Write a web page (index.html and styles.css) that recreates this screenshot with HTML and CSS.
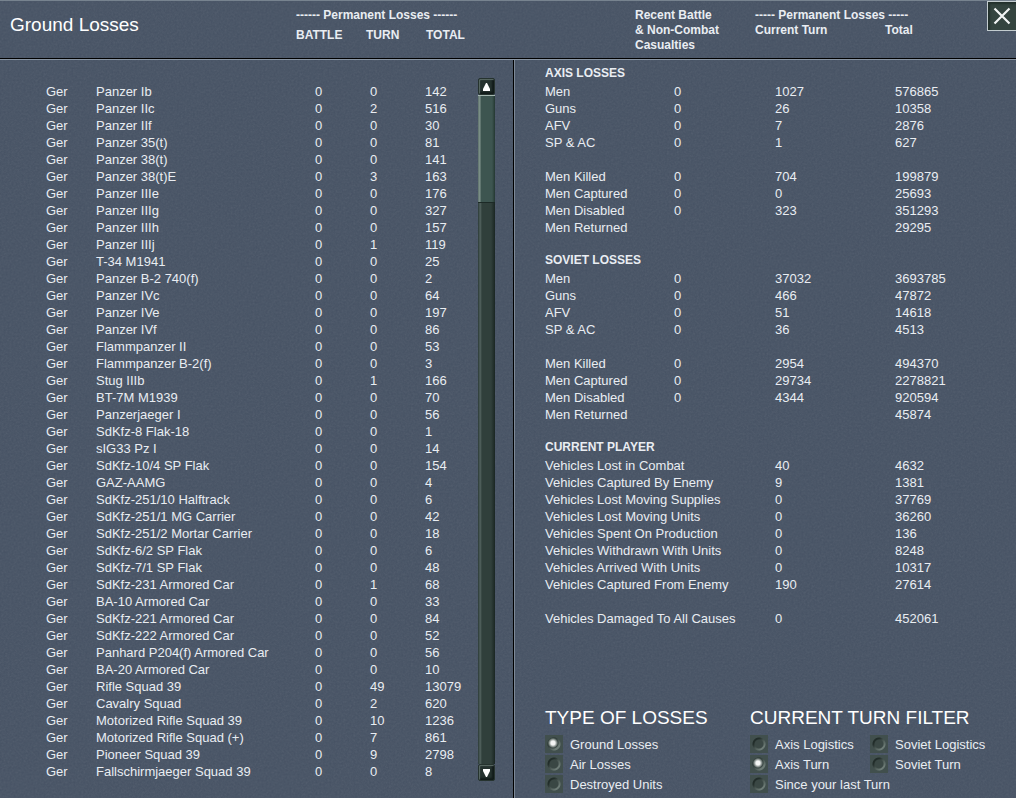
FILE: index.html
```
<!DOCTYPE html>
<html lang="en">
<head>
    <meta charset="UTF-8">
    <meta name="viewport" content="width=device-width, initial-scale=1.0">
    <title>Ground Losses</title>
    <link rel="stylesheet" href="styles.css">
</head>
<body>
    <header class="top">
        <div class="top-left">
            <h1>Ground Losses</h1>
            <div class="unit-head">
                <div>------ Permanent Losses ------</div>
                <div class="unit-cols">
                    <span>BATTLE</span>
                    <span>TURN</span>
                    <span>TOTAL</span>
                </div>
            </div>
        </div>
        <div class="top-right">
            <div class="recent-head">Recent Battle<br>&amp; Non-Combat<br>Casualties</div>
            <div class="perm-head">
                <div>----- Permanent Losses -----</div>
                <div class="perm-cols">
                    <span>Current Turn</span>
                    <span>Total</span>
                </div>
            </div>
        </div>
        <button class="close" type="button" aria-label="Close">
            <svg width="18" height="18" viewBox="0 0 18 18"><path d="M1.5 1.5L16.5 16.5M16.5 1.5L1.5 16.5" stroke="#f2f4f4" stroke-width="2.2"/></svg>
        </button>
    </header>

    <main class="main">
        <section class="units">
            <table class="unit-table">
                <colgroup>
                    <col class="c-nat"><col><col class="c-battle"><col class="c-turn"><col class="c-total">
                </colgroup>
                <tbody>
                    <tr><td>Ger</td><td>Panzer Ib</td><td>0</td><td>0</td><td>142</td></tr>
                    <tr><td>Ger</td><td>Panzer IIc</td><td>0</td><td>2</td><td>516</td></tr>
                    <tr><td>Ger</td><td>Panzer IIf</td><td>0</td><td>0</td><td>30</td></tr>
                    <tr><td>Ger</td><td>Panzer 35(t)</td><td>0</td><td>0</td><td>81</td></tr>
                    <tr><td>Ger</td><td>Panzer 38(t)</td><td>0</td><td>0</td><td>141</td></tr>
                    <tr><td>Ger</td><td>Panzer 38(t)E</td><td>0</td><td>3</td><td>163</td></tr>
                    <tr><td>Ger</td><td>Panzer IIIe</td><td>0</td><td>0</td><td>176</td></tr>
                    <tr><td>Ger</td><td>Panzer IIIg</td><td>0</td><td>0</td><td>327</td></tr>
                    <tr><td>Ger</td><td>Panzer IIIh</td><td>0</td><td>0</td><td>157</td></tr>
                    <tr><td>Ger</td><td>Panzer IIIj</td><td>0</td><td>1</td><td>119</td></tr>
                    <tr><td>Ger</td><td>T-34 M1941</td><td>0</td><td>0</td><td>25</td></tr>
                    <tr><td>Ger</td><td>Panzer B-2 740(f)</td><td>0</td><td>0</td><td>2</td></tr>
                    <tr><td>Ger</td><td>Panzer IVc</td><td>0</td><td>0</td><td>64</td></tr>
                    <tr><td>Ger</td><td>Panzer IVe</td><td>0</td><td>0</td><td>197</td></tr>
                    <tr><td>Ger</td><td>Panzer IVf</td><td>0</td><td>0</td><td>86</td></tr>
                    <tr><td>Ger</td><td>Flammpanzer II</td><td>0</td><td>0</td><td>53</td></tr>
                    <tr><td>Ger</td><td>Flammpanzer B-2(f)</td><td>0</td><td>0</td><td>3</td></tr>
                    <tr><td>Ger</td><td>Stug IIIb</td><td>0</td><td>1</td><td>166</td></tr>
                    <tr><td>Ger</td><td>BT-7M M1939</td><td>0</td><td>0</td><td>70</td></tr>
                    <tr><td>Ger</td><td>Panzerjaeger I</td><td>0</td><td>0</td><td>56</td></tr>
                    <tr><td>Ger</td><td>SdKfz-8 Flak-18</td><td>0</td><td>0</td><td>1</td></tr>
                    <tr><td>Ger</td><td>sIG33 Pz I</td><td>0</td><td>0</td><td>14</td></tr>
                    <tr><td>Ger</td><td>SdKfz-10/4 SP Flak</td><td>0</td><td>0</td><td>154</td></tr>
                    <tr><td>Ger</td><td>GAZ-AAMG</td><td>0</td><td>0</td><td>4</td></tr>
                    <tr><td>Ger</td><td>SdKfz-251/10 Halftrack</td><td>0</td><td>0</td><td>6</td></tr>
                    <tr><td>Ger</td><td>SdKfz-251/1 MG Carrier</td><td>0</td><td>0</td><td>42</td></tr>
                    <tr><td>Ger</td><td>SdKfz-251/2 Mortar Carrier</td><td>0</td><td>0</td><td>18</td></tr>
                    <tr><td>Ger</td><td>SdKfz-6/2 SP Flak</td><td>0</td><td>0</td><td>6</td></tr>
                    <tr><td>Ger</td><td>SdKfz-7/1 SP Flak</td><td>0</td><td>0</td><td>48</td></tr>
                    <tr><td>Ger</td><td>SdKfz-231 Armored Car</td><td>0</td><td>1</td><td>68</td></tr>
                    <tr><td>Ger</td><td>BA-10 Armored Car</td><td>0</td><td>0</td><td>33</td></tr>
                    <tr><td>Ger</td><td>SdKfz-221 Armored Car</td><td>0</td><td>0</td><td>84</td></tr>
                    <tr><td>Ger</td><td>SdKfz-222 Armored Car</td><td>0</td><td>0</td><td>52</td></tr>
                    <tr><td>Ger</td><td>Panhard P204(f) Armored Car</td><td>0</td><td>0</td><td>56</td></tr>
                    <tr><td>Ger</td><td>BA-20 Armored Car</td><td>0</td><td>0</td><td>10</td></tr>
                    <tr><td>Ger</td><td>Rifle Squad 39</td><td>0</td><td>49</td><td>13079</td></tr>
                    <tr><td>Ger</td><td>Cavalry Squad</td><td>0</td><td>2</td><td>620</td></tr>
                    <tr><td>Ger</td><td>Motorized Rifle Squad 39</td><td>0</td><td>10</td><td>1236</td></tr>
                    <tr><td>Ger</td><td>Motorized Rifle Squad (+)</td><td>0</td><td>7</td><td>861</td></tr>
                    <tr><td>Ger</td><td>Pioneer Squad 39</td><td>0</td><td>9</td><td>2798</td></tr>
                    <tr><td>Ger</td><td>Fallschirmjaeger Squad 39</td><td>0</td><td>0</td><td>8</td></tr>
                </tbody>
            </table>
            <div class="scrollbar">
                <button class="arrow" type="button" aria-label="Scroll up">
                    <svg width="9" height="8" viewBox="0 0 9 8"><path d="M4 0H5L8 6V8H1V6Z" fill="#fff"/></svg>
                </button>
                <div class="track"><div class="thumb"></div></div>
                <button class="arrow" type="button" aria-label="Scroll down">
                    <svg width="9" height="8" viewBox="0 0 9 8"><path d="M1 0H8V2L5 8H4L1 2Z" fill="#fff"/></svg>
                </button>
            </div>
        </section>

        <section class="summary">
            <h2>AXIS LOSSES</h2>
            <table class="sum-table">
                <colgroup><col class="s-name"><col class="s-recent"><col class="s-turn"><col></colgroup>
                <tbody>
                    <tr><td>Men</td><td>0</td><td>1027</td><td>576865</td></tr>
                    <tr><td>Guns</td><td>0</td><td>26</td><td>10358</td></tr>
                    <tr><td>AFV</td><td>0</td><td>7</td><td>2876</td></tr>
                    <tr><td>SP &amp; AC</td><td>0</td><td>1</td><td>627</td></tr>
                </tbody>
                <tbody class="spaced">
                    <tr><td>Men Killed</td><td>0</td><td>704</td><td>199879</td></tr>
                    <tr><td>Men Captured</td><td>0</td><td>0</td><td>25693</td></tr>
                    <tr><td>Men Disabled</td><td>0</td><td>323</td><td>351293</td></tr>
                    <tr><td>Men Returned</td><td></td><td></td><td>29295</td></tr>
                </tbody>
            </table>

            <h2>SOVIET LOSSES</h2>
            <table class="sum-table">
                <colgroup><col class="s-name"><col class="s-recent"><col class="s-turn"><col></colgroup>
                <tbody>
                    <tr><td>Men</td><td>0</td><td>37032</td><td>3693785</td></tr>
                    <tr><td>Guns</td><td>0</td><td>466</td><td>47872</td></tr>
                    <tr><td>AFV</td><td>0</td><td>51</td><td>14618</td></tr>
                    <tr><td>SP &amp; AC</td><td>0</td><td>36</td><td>4513</td></tr>
                </tbody>
                <tbody class="spaced">
                    <tr><td>Men Killed</td><td>0</td><td>2954</td><td>494370</td></tr>
                    <tr><td>Men Captured</td><td>0</td><td>29734</td><td>2278821</td></tr>
                    <tr><td>Men Disabled</td><td>0</td><td>4344</td><td>920594</td></tr>
                    <tr><td>Men Returned</td><td></td><td></td><td>45874</td></tr>
                </tbody>
            </table>

            <h2>CURRENT PLAYER</h2>
            <table class="sum-table">
                <colgroup><col class="s-vehicle"><col class="s-turn"><col></colgroup>
                <tbody>
                    <tr><td>Vehicles Lost in Combat</td><td>40</td><td>4632</td></tr>
                    <tr><td>Vehicles Captured By Enemy</td><td>9</td><td>1381</td></tr>
                    <tr><td>Vehicles Lost Moving Supplies</td><td>0</td><td>37769</td></tr>
                    <tr><td>Vehicles Lost Moving Units</td><td>0</td><td>36260</td></tr>
                    <tr><td>Vehicles Spent On Production</td><td>0</td><td>136</td></tr>
                    <tr><td>Vehicles Withdrawn With Units</td><td>0</td><td>8248</td></tr>
                    <tr><td>Vehicles Arrived With Units</td><td>0</td><td>10317</td></tr>
                    <tr><td>Vehicles Captured From Enemy</td><td>190</td><td>27614</td></tr>
                </tbody>
                <tbody class="spaced">
                    <tr><td>Vehicles Damaged To All Causes</td><td>0</td><td>452061</td></tr>
                </tbody>
            </table>

            <form class="filters">
                <fieldset class="type">
                    <legend>TYPE OF LOSSES</legend>
                    <label><input type="radio" name="type" checked>Ground Losses</label>
                    <label><input type="radio" name="type">Air Losses</label>
                    <label><input type="radio" name="type">Destroyed Units</label>
                </fieldset>
                <fieldset class="turn">
                    <legend>CURRENT TURN FILTER</legend>
                    <div class="turn-grid">
                        <label><input type="radio" name="turn">Axis Logistics</label>
                        <label><input type="radio" name="turn">Soviet Logistics</label>
                        <label><input type="radio" name="turn" checked>Axis Turn</label>
                        <label><input type="radio" name="turn">Soviet Turn</label>
                        <label class="wide"><input type="radio" name="turn">Since your last Turn</label>
                    </div>
                </fieldset>
            </form>
        </section>
    </main>
</body>
</html>
```
FILE: styles.css
```
* {
    margin: 0;
    padding: 0;
    box-sizing: border-box;
}

body {
    display: flex;
    flex-direction: column;
    min-height: 100vh;
    font-family: "Liberation Sans", Arial, sans-serif;
    font-size: 13px;
    line-height: 17px;
    color: #e9edf2;
    background-color: #455163;
    /* fine grain over the slate colour */
    background-image: url("data:image/svg+xml,%3Csvg xmlns='http://www.w3.org/2000/svg' width='256' height='256'%3E%3Cfilter id='n'%3E%3CfeTurbulence type='fractalNoise' baseFrequency='.5' numOctaves='2' stitchTiles='stitch'/%3E%3CfeColorMatrix type='saturate' values='0'/%3E%3C/filter%3E%3Crect width='256' height='256' filter='url(%23n)' opacity='.1'/%3E%3C/svg%3E");
}

/* Header */
.top {
    position: relative;
    display: grid;
    grid-template-columns: 514fr 502fr;
    min-height: 59px;
    border-top: 1px solid #77838f;
    border-bottom: 1px solid #000;
    box-shadow: 0 1px 0 #8995a3;
    font-size: 12px;
    font-weight: bold;
    line-height: 15px;
}

.top-left {
    display: flex;
    justify-content: space-between;
    padding: 7px 20px 0 10px;
}

.top h1 {
    padding-top: 5px;
    font-size: 19px;
    font-weight: normal;
    line-height: 24px;
    color: #fff;
}

.unit-head {
    width: 198px;
}

.unit-cols {
    display: grid;
    grid-template-columns: 70px 60px 1fr;
    padding-top: 5px;
}

.top-right {
    display: grid;
    grid-template-columns: 120px 1fr;
    padding: 7px 0 0 121px;
}

.perm-cols {
    display: grid;
    grid-template-columns: 130px 1fr;
}

.close {
    position: absolute;
    top: 0;
    right: 0;
    display: flex;
    align-items: center;
    justify-content: center;
    width: 29px;
    height: 30px;
    border: 1px solid #c3cccf;
    border-right-width: 0;
    background: #34443f;
    box-shadow: inset 2px 2px 2px #23302c;
}

/* Body */
.main {
    flex: 1;
    display: grid;
    grid-template-columns: 514fr 502fr;
    padding-top: 1px;
}

.units {
    display: flex;
    align-items: flex-start;
    padding: 18px 18px 0 46px;
    border-right: 1px solid #000;
    box-shadow: 1px 0 0 #7d8997;
}

table {
    border-collapse: collapse;
    table-layout: fixed;
    width: 100%;
}

td {
    height: 17px;
    white-space: nowrap;
}

.unit-table {
    flex: 1;
    margin-top: 5px;
}

.c-nat {
    width: 50px;
}

.c-battle,
.c-turn {
    width: 55px;
}

.c-total {
    width: 53px;
}

/* Scrollbar */
.scrollbar {
    display: flex;
    flex-direction: column;
    align-self: stretch;
    width: 17px;
    margin-bottom: 17px;
}

.arrow {
    display: flex;
    align-items: center;
    justify-content: center;
    width: 17px;
    height: 17px;
    border: 1px solid #26332f;
    border-radius: 2px;
    background: #25322f;
    box-shadow: inset 1px 1px 1px #5b6b65, inset -2px -2px 2px #111b19;
}

.arrow svg {
    flex: none;
}

.track {
    flex: 1;
    background: linear-gradient(to right, #33423f 0 1px, #566662 2px, #303f3b 4px, #303f3b 13px, #1a2623 17px);
}

.thumb {
    height: 108px;
    border-top: 1px solid #a5b7b0;
    border-bottom: 1px solid #1c2926;
    background: linear-gradient(to right, #5c706a 0, #84978f 2px, #3d5550 3px, #3d5550 14px, #243832 17px);
}

/* Summary */
.summary {
    display: flex;
    flex-direction: column;
    padding: 5px 20px 4px 31px;
}

.summary h2 {
    font-size: 12px;
    line-height: 17px;
    padding-bottom: 1px;
}

.summary table + h2 {
    margin-top: 16px;
}

.s-name {
    width: 129px;
}

.s-recent {
    width: 101px;
}

.s-vehicle {
    width: 230px;
}

.s-turn {
    width: 120px;
}

.spaced::before {
    content: "";
    display: table-row;
    height: 17px;
}

/* Filters */
.filters {
    display: grid;
    grid-template-columns: 205px 1fr;
    margin-top: auto;
}

fieldset {
    border: 0;
    min-width: 0;
}

legend {
    font-size: 19px;
    line-height: 24px;
    padding-bottom: 4px;
    white-space: nowrap;
    color: #fff;
}

.filters label {
    display: flex;
    align-items: center;
    gap: 7px;
    height: 20px;
    white-space: nowrap;
}

.turn-grid {
    display: grid;
    grid-template-columns: 120px 1fr;
}

.turn-grid .wide {
    grid-column: 1 / -1;
}

input[type="radio"] {
    appearance: none;
    width: 18px;
    height: 18px;
    background: radial-gradient(circle at 9px 9px, #3a4744 0 4px, transparent 5px),
        radial-gradient(circle at 9px 9px, transparent 6px, #414f4d 7px),
        linear-gradient(135deg, #222d2a 35%, #46534f 50%, #6d7b76 70%);
}

input[type="radio"]:checked {
    background: radial-gradient(circle at 8px 8px, #f4f5f4 0 2px, #b4bab7 3px, #3a4744 5px, transparent 6px),
        radial-gradient(circle at 9px 9px, transparent 6px, #414f4d 7px),
        linear-gradient(135deg, #222d2a 35%, #46534f 50%, #6d7b76 70%);
}
```
